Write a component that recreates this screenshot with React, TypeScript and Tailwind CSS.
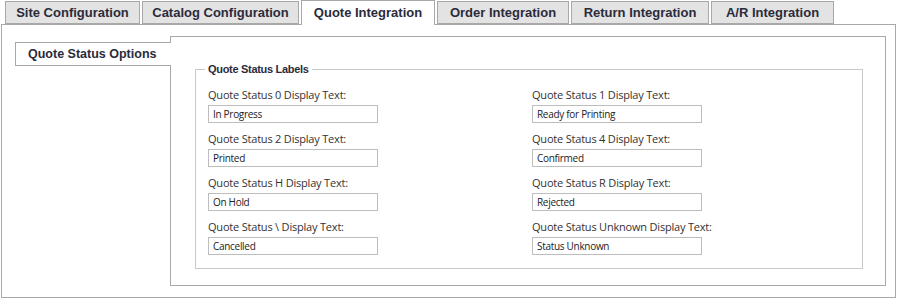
import React from "react";

const tabs = [
  { label: "Site Configuration", w: "w-[135px]" },
  { label: "Catalog Configuration", w: "w-[157px]" },
  { label: "Quote Integration", w: "w-[134px]", active: true },
  { label: "Order Integration", w: "w-[132px]" },
  { label: "Return Integration", w: "w-[138px]" },
  { label: "A/R Integration", w: "w-[123px]" },
];

const fields = [
  { label: "Quote Status 0 Display Text:", value: "In Progress" },
  { label: "Quote Status 1 Display Text:", value: "Ready for Printing" },
  { label: "Quote Status 2 Display Text:", value: "Printed" },
  { label: "Quote Status 4 Display Text:", value: "Confirmed" },
  { label: "Quote Status H Display Text:", value: "On Hold" },
  { label: "Quote Status R Display Text:", value: "Rejected" },
  { label: "Quote Status \\ Display Text:", value: "Cancelled" },
  { label: "Quote Status Unknown Display Text:", value: "Status Unknown" },
];

export default function App() {
  return (
    <div className="w-[899px] h-[299px] bg-white overflow-hidden font-['Liberation_Sans',Arial,sans-serif] text-[#333]">
      {/* Top tabs */}
      <div className="flex items-end gap-[2px] pl-[5px] h-[25px] pt-[1px] relative z-10">
        {tabs.map((t) =>
          t.active ? (
            <div
              key={t.label}
              className={`${t.w} h-[25px] flex items-center justify-center border border-b-0 border-[#a8a8a8] bg-white text-[13px] font-bold text-[#2b2b3b] pb-[1px]`}
            >
              {t.label}
            </div>
          ) : (
            <div
              key={t.label}
              className={`${t.w} h-[23px] mb-[1px] flex items-center justify-center border border-[#a8a8a8] bg-[#e3e3e3] text-[13px] font-bold text-[#2b2b3b]`}
            >
              {t.label}
            </div>
          )
        )}
      </div>

      {/* Outer panel */}
      <div className="-mt-[1px] ml-[1px] w-[895px] h-[274px] border border-[#a8a8a8] flex pt-[11px] pl-[13px] pr-[9px] pb-[11px]">
        {/* Vertical tab */}
        <div className="mt-[6px] w-[156px] h-[24px] -mr-[1px] relative z-10 bg-white border border-r-0 border-[#a8a8a8] flex items-center pl-[12px] text-[12.5px] font-bold text-[#2b2b3b]">
          Quote Status Options
        </div>

        {/* Inner panel */}
        <div className="flex-1 border border-[#a8a8a8] pt-[24px] pl-[24px] pr-[22px]">
          <fieldset className="border border-[#c8c8c8] pl-[12px] pb-[13px] pt-[10px]">
            <legend className="-ml-[3px] px-[3px] text-[11px] tracking-[-0.3px] font-bold text-[#2b2b3b] leading-[16px]">
              Quote Status Labels
            </legend>
            <div className="grid grid-cols-[324px_1fr] gap-y-[8px] font-['Open_Sans',sans-serif]">
              {fields.map((f) => (
                <div key={f.label} className="flex flex-col">
                  <label className="text-[11px] tracking-[-0.2px] leading-[16px] text-[#333]">{f.label}</label>
                  <input
                    readOnly
                    value={f.value}
                    className="mt-[2px] w-[170px] h-[18px] border border-[#bdbdbd] px-[4px] text-[10px] tracking-[-0.3px] text-[#222] outline-none"
                  />
                </div>
              ))}
            </div>
          </fieldset>
        </div>
      </div>
    </div>
  );
}
